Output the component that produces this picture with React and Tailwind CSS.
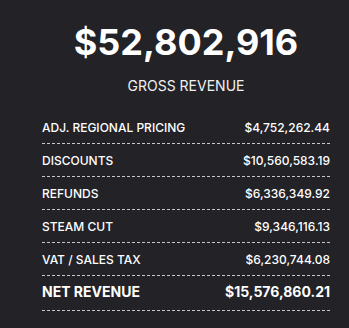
const rows = [
  { label: 'ADJ. REGIONAL PRICING', value: '$4,752,262.44' },
  { label: 'DISCOUNTS', value: '$10,560,583.19' },
  { label: 'REFUNDS', value: '$6,336,349.92' },
  { label: 'STEAM CUT', value: '$9,346,116.13' },
  { label: 'VAT / SALES TAX', value: '$6,230,744.08' },
];

export default function App() {
  return (
    <div className="w-[349px] h-[328px] bg-[#222227] text-white font-['Inter',sans-serif] overflow-hidden">
      <div className="ml-[42px] w-[288px] pt-[20px]">
        {/* Headline */}
        <div className="text-center">
          <p className="text-[36px] leading-[44px] font-bold">$52,802,916</p>
          <p className="mt-[12px] text-[14px] leading-5 text-[#f1f1f1]">GROSS REVENUE</p>
        </div>

        {/* Breakdown */}
        <div className="mt-[15px]">
          {rows.map(r => (
            <div
              key={r.label}
              className="flex items-center justify-between pt-[7px] pb-[5px] leading-5 text-[12px] font-medium border-b border-dashed border-[#c8c8c8]"
            >
              <span>{r.label}</span>
              <span>{r.value}</span>
            </div>
          ))}
          <div className="flex items-center justify-between pt-[4px] pb-[6px] leading-6 text-[14px] font-bold border-b border-dashed border-[#c8c8c8]">
            <span>NET REVENUE</span>
            <span>$15,576,860.21</span>
          </div>
        </div>
      </div>
    </div>
  );
}
